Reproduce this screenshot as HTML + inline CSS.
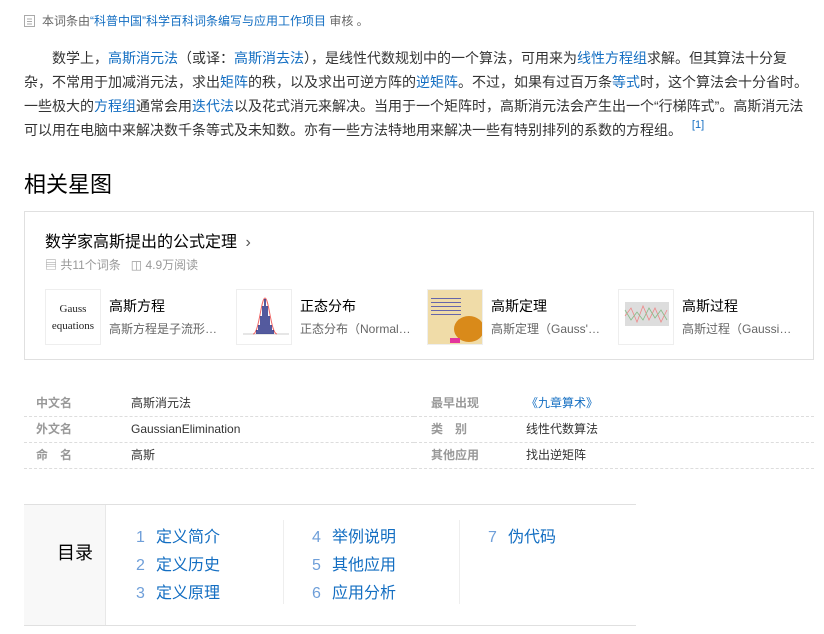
<!DOCTYPE html>
<html><head><meta charset="utf-8"><style>
*{margin:0;padding:0;box-sizing:border-box}
body{width:824px;height:634px;background:#fff;font-family:"Liberation Sans","Noto Sans CJK SC",sans-serif;color:#333;position:relative;overflow:hidden}
a{color:#136ec2;text-decoration:none}
.abs{position:absolute}
.p{position:absolute;left:24px;top:46px;width:790px;font-size:14px;line-height:24px;color:#333;text-indent:28px}
.card{position:absolute;left:24px;top:211px;width:790px;height:149px;border:1px solid #e0e0e0}
.th{position:absolute;top:77px;width:56px;height:56px;border:1px solid #eee;background:#fff;overflow:hidden}
.nm{position:absolute;top:84px;font-size:14px;color:#000}
.ds{position:absolute;top:108px;font-size:12px;color:#666;white-space:nowrap}
.row{position:absolute;height:26px;border-bottom:1px dashed #ddd;font-size:12px;line-height:25px}
.lb{position:absolute;left:12px;color:#999;font-weight:bold}
.vl{position:absolute;left:107px;color:#333}
.cat{position:absolute;font-size:16px;color:#136ec2}
.cat span{color:#6f9fd9;display:inline-block;width:20px}
</style></head><body>
<div class="abs" style="left:24px;top:13px;font-size:12px;color:#666;line-height:16px">
<svg width="12" height="12" style="vertical-align:-2px;margin-right:6px"><rect x="0.5" y="0.5" width="10" height="11" fill="none" stroke="#aaa"/><path d="M3 4h5M3 6.5h5M3 9h5" stroke="#aaa"/></svg>本词条由<a>“科普中国”科学百科词条编写与应用工作项目</a> 审核 。</div>
<div class="p">数学上，<a>高斯消元法</a>（或译：<a>高斯消去法</a>），是线性代数规划中的一个算法，可用来为<a>线性方程组</a>求解。但其算法十分复杂，不常用于加减消元法，求出<a>矩阵</a>的秩，以及求出可逆方阵的<a>逆矩阵</a>。不过，如果有过百万条<a>等式</a>时，这个算法会十分省时。一些极大的<a>方程组</a>通常会用<a>迭代法</a>以及花式消元来解决。当用于一个矩阵时，高斯消元法会产生出一个“行梯阵式”。高斯消元法可以用在电脑中来解决数千条等式及未知数。亦有一些方法特地用来解决一些有特别排列的系数的方程组。 <span style="display:inline-block;font-size:11px;line-height:11px;vertical-align:top;margin-top:2px;color:#136ec2;margin-left:6px;text-indent:0">[1]</span></div>
<div class="abs" style="left:24px;top:171px;font-size:22px;color:#000;line-height:28px">相关星图</div>
<div class="card">
<div class="abs" style="left:20px;top:16px;font-size:16px;color:#000">数学家高斯提出的公式定理 <span style="color:#555;margin-left:4px">&#x203A;</span></div>
<div class="abs" style="left:20px;top:44px;font-size:12px;color:#999">▤ 共11个词条 &nbsp; ◫ 4.9万阅读</div>
<div class="th" style="left:20px;font-family:'Liberation Serif',serif;font-size:11px;color:#222;text-align:center;line-height:17px;padding-top:11px">Gauss<br>equations</div>
<div class="nm" style="left:84px">高斯方程</div><div class="ds" style="left:84px">高斯方程是子流形…</div>
<div class="th" style="left:211px"><svg width="56" height="56"><path d="M6 44h46" stroke="#ccc"/><path d="M16 44 C22 44 24 8 28 8 C32 8 34 44 40 44" fill="none" stroke="#e66" stroke-width="1"/><g stroke="#1a237e" stroke-width="1.5"><path d="M20 44v-4M22 44v-9M24 44v-18M26 44v-28M28 44v-35M30 44v-28M32 44v-18M34 44v-9M36 44v-4"/></g></svg></div>
<div class="nm" style="left:275px">正态分布</div><div class="ds" style="left:275px">正态分布（Normal…</div>
<div class="th" style="left:402px;background:#f0dca8"><div style="position:absolute;left:26px;top:26px;width:30px;height:26px;border-radius:50%;background:#d98a1a"></div><div style="position:absolute;left:3px;top:5px;width:30px;height:20px;background:repeating-linear-gradient(#f0dca8 0 3px,#66a 3px 4px)"></div><div style="position:absolute;left:22px;top:48px;width:10px;height:5px;background:#e3359d"></div></div>
<div class="nm" style="left:466px">高斯定理</div><div class="ds" style="left:466px">高斯定理（Gauss'…</div>
<div class="th" style="left:593px"><div style="position:absolute;left:6px;top:12px;width:44px;height:24px;background:#ddd"></div><svg width="56" height="56" style="position:absolute;left:0;top:0"><path d="M6 26 L12 18 L18 32 L24 16 L30 30 L36 18 L42 32 L48 20" fill="none" stroke="#e88" stroke-width=".8"/><path d="M6 20 L12 30 L18 22 L24 30 L30 18 L36 28 L42 20 L48 30" fill="none" stroke="#8b8" stroke-width=".8"/></svg></div>
<div class="nm" style="left:657px">高斯过程</div><div class="ds" style="left:657px">高斯过程（Gaussi…</div>
</div>
<div class="row" style="left:24px;top:391px;width:390px"><span class="lb">中文名</span><span class="vl">高斯消元法</span></div>
<div class="row" style="left:24px;top:417px;width:390px"><span class="lb">外文名</span><span class="vl">GaussianElimination</span></div>
<div class="row" style="left:24px;top:443px;width:390px"><span class="lb">命&emsp;名</span><span class="vl">高斯</span></div>
<div class="row" style="left:414px;top:391px;width:400px"><span class="lb" style="left:17px">最早出现</span><span class="vl" style="left:112px;color:#136ec2">《九章算术》</span></div>
<div class="row" style="left:414px;top:417px;width:400px"><span class="lb" style="left:17px">类&emsp;别</span><span class="vl" style="left:112px">线性代数算法</span></div>
<div class="row" style="left:414px;top:443px;width:400px"><span class="lb" style="left:17px">其他应用</span><span class="vl" style="left:112px">找出逆矩阵</span></div>
<div class="abs" style="left:24px;top:504px;width:612px;height:122px;border-top:1px solid #e0e0e0;border-bottom:1px solid #e0e0e0"></div>
<div class="abs" style="left:24px;top:505px;width:82px;height:120px;background:#f8f8f8;border-right:1px solid #e8e8e8"></div>
<div class="abs" style="left:57px;top:539px;font-size:18px;color:#000">目录</div>
<div class="abs" style="left:283px;top:520px;width:1px;height:84px;background:#eee"></div>
<div class="abs" style="left:459px;top:520px;width:1px;height:84px;background:#eee"></div>
<div class="cat" style="left:136px;top:523px"><span>1</span>定义简介</div>
<div class="cat" style="left:136px;top:551px"><span>2</span>定义历史</div>
<div class="cat" style="left:136px;top:579px"><span>3</span>定义原理</div>
<div class="cat" style="left:312px;top:523px"><span>4</span>举例说明</div>
<div class="cat" style="left:312px;top:551px"><span>5</span>其他应用</div>
<div class="cat" style="left:312px;top:579px"><span>6</span>应用分析</div>
<div class="cat" style="left:488px;top:523px"><span>7</span>伪代码</div>
</body></html>
